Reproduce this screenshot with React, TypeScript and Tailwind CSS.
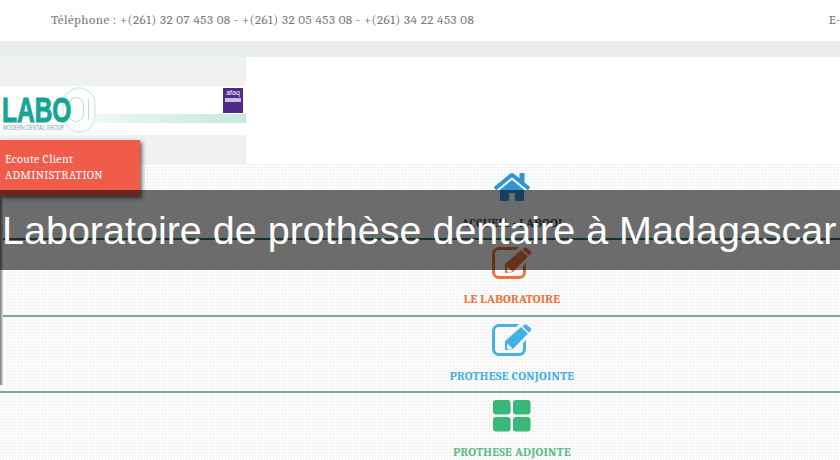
import type { ReactNode } from 'react';
import { FaHome } from 'react-icons/fa';

const serif = "font-['Cambria','Liberation_Serif',serif]";

// Old font-awesome style "pencil in a square"
function EditIcon({ className }: { className: string }) {
  return (
    <svg viewBox="0 0 40 32" className={className} fill="currentColor">
      <path d="M7 0h20l-3 3H7a4 4 0 0 0-4 4v18a4 4 0 0 0 4 4h20a4 4 0 0 0 4-4v-6l3-3v9a7 7 0 0 1-7 7H7a7 7 0 0 1-7-7V7a7 7 0 0 1 7-7z" />
      <path fillRule="evenodd" d="M13 17 29 3l7 6.500L21 25l-8 1zM15.500 19.500l-.7 4.300 1.500 1.400 4.200-.8z" />
      <path d="M32 1a2 2 0 0 1 3 0l3.500 3a2 2 0 0 1 0 3l-1.500 1.500-6.500-6z" />
    </svg>
  );
}

function GridIcon({ className }: { className: string }) {
  return (
    <svg viewBox="0 0 38 32" className={className} fill="currentColor">
      <rect x="0" y="0" width="17.500" height="14.500" rx="3" />
      <rect x="20" y="0" width="17.500" height="14.500" rx="3" />
      <rect x="0" y="17" width="17.500" height="14.500" rx="3" />
      <rect x="20" y="17" width="17.500" height="14.500" rx="3" />
    </svg>
  );
}

function Logo() {
  return (
    <div className="relative h-[49px] bg-white overflow-hidden">
      <div className="absolute left-[96px] top-[28px] w-[150px] h-[9px] bg-gradient-to-r from-[#eef8f5] to-[#c6e7df]" />
      <div className="absolute left-[62px] top-[1px] w-[34px] h-[46px] rounded-full border-2 border-[#e2efec]" />
      <div className="absolute left-[68px] top-[11px] w-[16px] h-[25px] rounded-full border border-[#bcdcd6]" />
      <div className="absolute left-[88px] top-[13px] w-px h-[20px] bg-[#bcdcd6]" />
      <span className="absolute left-[2px] top-[4px] origin-left scale-x-[0.7] font-['Liberation_Sans',sans-serif] font-bold text-[#15a594] text-[35px] leading-[40px] [-webkit-text-stroke:1px_#15a594]">
        LABO
      </span>
      <span className="absolute left-[3px] top-[38px] origin-left scale-x-[0.7] font-['Liberation_Sans',sans-serif] text-[#8a9aa0] text-[7px] leading-[8px] whitespace-nowrap">
        MODERN DENTAL GROUP
      </span>
      <div className="absolute left-[223px] top-[2px] w-[20px] h-[25px] bg-[#4f2a87] flex flex-col items-center">
        <span className="font-['Liberation_Sans',sans-serif] text-white text-[7px] leading-[9px]">afaq</span>
        <div className="w-[16px] h-[4px] bg-white/70 mt-[1px]" />
      </div>
    </div>
  );
}

function NavItem({ label, color, icon, border }: { label: string; color: string; icon: ReactNode; border: string }) {
  return (
    <div className={`pt-[7px] border-b-2 ${border} flex flex-col items-center`}>
      <div className="h-[32px] flex items-center">{icon}</div>
      <span className={`mt-[13px] ${serif} font-bold text-[12px] leading-[14px] tracking-[0.250px] ${color}`}>{label}</span>
    </div>
  );
}

export default function App() {
  return (
    <div className="relative w-[840px] h-[460px] overflow-hidden bg-white">
      <div className="h-[41px] bg-white flex justify-between items-center pl-[51px] pb-[1px]">
        <span className={`${serif} text-[13px] tracking-[0.450px] text-[#777] whitespace-nowrap`}>
          Téléphone : +(261) 32 07 453 08 - +(261) 32 05 453 08 - +(261) 34 22 453 08
        </span>
        <span className={`${serif} text-[13px] text-[#777]`}>E-</span>
      </div>
      <div className="h-[16px] bg-[#e9edf0]" />
      <div className="flex h-[107px]">
        <div className="w-[246px] bg-[#f0f1f1] pt-[29px]">
          <Logo />
        </div>
        <div className="flex-1 bg-white" />
      </div>
      <div className="relative w-[1024px] h-[296px] bg-white bg-[linear-gradient(#f5f5f5_1px,transparent_1px),linear-gradient(90deg,#f5f5f5_1px,transparent_1px)] bg-[size:3px_3px]">
        <div className="absolute left-0 top-0 w-[3px] h-[221px] bg-gradient-to-r from-[#777] to-[#e5e5e5]" />
        <div className="grid grid-rows-[76px_77px_76px_67px] h-full">
          <NavItem label="ACCUEIL - LABOOI" color="text-[#2f4f5f]" border="border-[#2f6f6f]" icon={<FaHome className="w-[36px] h-[32px] text-[#2f96d6]" />} />
          <NavItem label="LE LABORATOIRE" color="text-[#e8743b]" border="border-[#72abaa]" icon={<EditIcon className="w-[40px] h-[32px] text-[#e8743b]" />} />
          <NavItem label="PROTHESE CONJOINTE" color="text-[#45b0e6]" border="border-[#72abaa]" icon={<EditIcon className="w-[40px] h-[32px] text-[#45b0e6]" />} />
          <NavItem label="PROTHESE ADJOINTE" color="text-[#5dbb8c]" border="border-transparent" icon={<GridIcon className="w-[38px] h-[32px] text-[#37b876]" />} />
        </div>
      </div>
      <div className={`absolute left-0 top-[140px] w-[140px] h-[56px] bg-[#f15b4a] shadow-[2px_2px_4px_rgba(0,0,0,0.6)] pl-[5px] pt-[12px] ${serif} text-white text-[12px] tracking-[0.300px] leading-[15.500px]`}>
        <div>Ecoute Client</div>
        <div>ADMINISTRATION</div>
      </div>
      <div className="absolute left-0 top-[190px] w-full h-[80px] bg-black/[0.57] flex items-center overflow-hidden">
        <span className="pl-[2px] font-['Liberation_Sans',sans-serif] text-white text-[39.500px] leading-[40px] whitespace-nowrap">
          Laboratoire de prothèse dentaire à Madagascar
        </span>
      </div>
    </div>
  );
}
